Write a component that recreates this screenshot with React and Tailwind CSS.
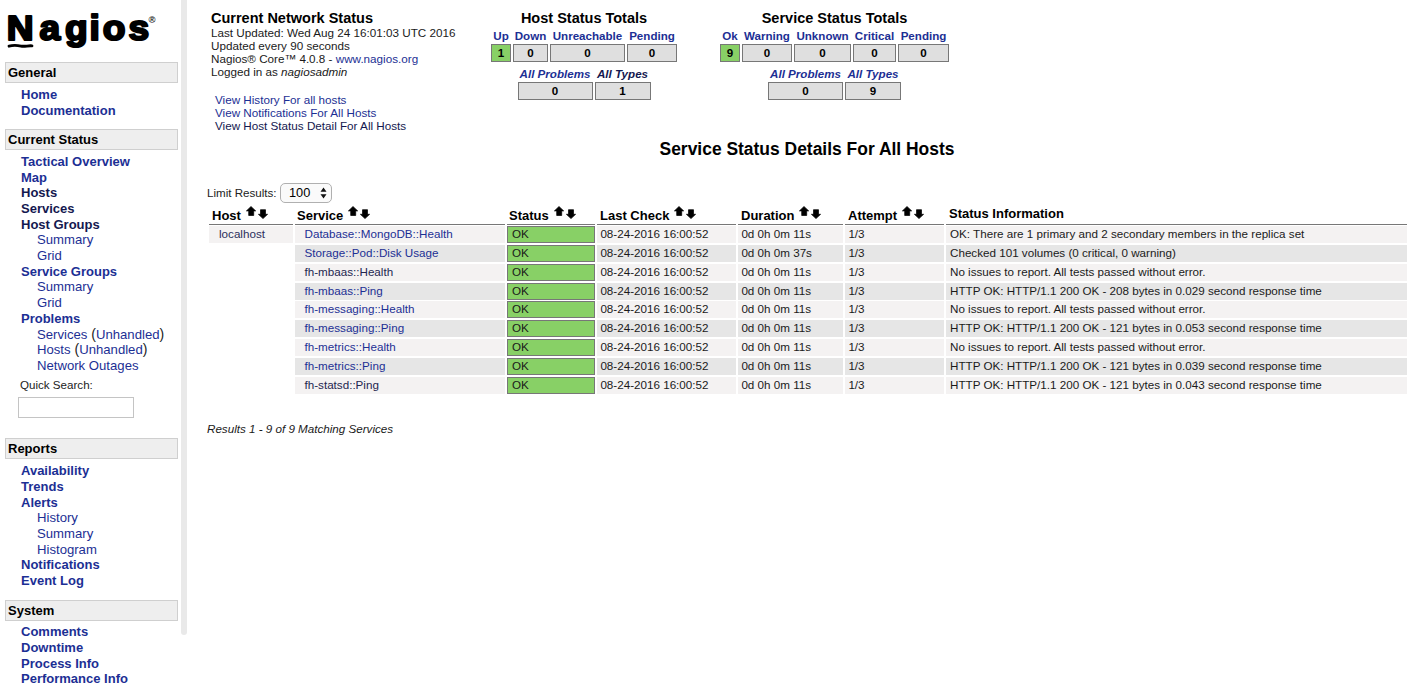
import React from "react";

const LINK = "text-[#1c2f94]";
const VISITED = "text-[#14184f]";

function SectionHeader({ children }) {
  return (
    <div className="ml-[5px] flex h-[21px] w-[173px] items-center border border-[#cfcfcf] bg-[#eeeeee] pl-[2px] text-[13px] font-bold text-black">
      {children}
    </div>
  );
}

function NavItem({ children, visited, sub }) {
  return (
    <li
      className={`flex h-[15.67px] items-center whitespace-pre ${visited ? VISITED : LINK} ${
        sub ? "pl-[37px] text-[13.15px]" : "pl-[21px] font-bold"
      }`}
    >
      {children}
    </li>
  );
}

function Unhandled({ label }) {
  return (
    <span className="leading-[14px]">
      <a>{label}</a>
      <span className="text-[14px] text-[#222]"> (</span>
      <a>Unhandled</a>
      <span className="text-[14px] text-[#222]">)</span>
    </span>
  );
}

function Logo() {
  return (
    <svg className="block h-[62px] w-[180px]" viewBox="0 0 180 62">
      <text
        transform="scale(1.05 1)"
        x="6.4 37.7 61.9 85.2 97.8 122.5"
        y="39.6"
        fontFamily="Liberation Sans, sans-serif"
        fontWeight="700"
        fontSize="35.4"
        stroke="#000"
        strokeWidth="2.2"
        strokeLinejoin="round"
      >
        Nagios
      </text>
      <path
        d="M9 46.2 C13 45.1 17 45.3 21 46.1 C25 46.8 28 45.4 32 45.8"
        fill="none"
        stroke="#000"
        strokeWidth="2.8"
        strokeLinecap="round"
      />
      <text x="148.5" y="23" fontFamily="Liberation Sans, sans-serif" fontWeight="700" fontSize="9.5" fill="#222">
        ®
      </text>
    </svg>
  );
}

function Sidebar() {
  return (
    <aside className="w-[181px] shrink-0 text-[13px]">
      <Logo />
      <SectionHeader>General</SectionHeader>
      <ul className="h-[46px] pt-[4px]">
        <NavItem>Home</NavItem>
        <NavItem>Documentation</NavItem>
      </ul>
      <SectionHeader>Current Status</SectionHeader>
      <ul className="h-[227px] pt-[4.1px]">
        <NavItem>Tactical Overview</NavItem>
        <NavItem>Map</NavItem>
        <NavItem visited>Hosts</NavItem>
        <NavItem visited>Services</NavItem>
        <NavItem visited>Host Groups</NavItem>
        <NavItem sub>Summary</NavItem>
        <NavItem sub>Grid</NavItem>
        <NavItem>Service Groups</NavItem>
        <NavItem sub>Summary</NavItem>
        <NavItem sub>Grid</NavItem>
        <NavItem>Problems</NavItem>
        <NavItem sub>
          <Unhandled label="Services" />
        </NavItem>
        <NavItem sub>
          <Unhandled label="Hosts" />
        </NavItem>
        <NavItem sub>Network Outages</NavItem>
      </ul>
      <div className="h-[61px]">
        <label className="block pl-[20px] text-[11.6px] leading-[15px] text-[#222]">Quick Search:</label>
        <input className="mt-[5px] ml-[18px] block h-[21px] w-[116px] border border-[#c4c4c4] bg-white outline-none" />
      </div>
      <SectionHeader>Reports</SectionHeader>
      <ul className="h-[141px] pt-[4.4px]">
        <NavItem>Availability</NavItem>
        <NavItem>Trends</NavItem>
        <NavItem>Alerts</NavItem>
        <NavItem sub>History</NavItem>
        <NavItem sub>Summary</NavItem>
        <NavItem sub>Histogram</NavItem>
        <NavItem>Notifications</NavItem>
        <NavItem>Event Log</NavItem>
      </ul>
      <SectionHeader>System</SectionHeader>
      <ul className="pt-[3.4px]">
        <NavItem>Comments</NavItem>
        <NavItem>Downtime</NavItem>
        <NavItem>Process Info</NavItem>
        <NavItem>Performance Info</NavItem>
      </ul>
    </aside>
  );
}

function Cell({ label, value, width, ok, visited }) {
  return (
    <div className={`flex shrink-0 flex-col items-center ${width}`}>
      <div className={`h-[16px] leading-[15px] whitespace-nowrap ${visited ? VISITED : LINK}`}>{label}</div>
      <div
        className={`flex h-[18px] w-full items-center justify-center border border-[#777] text-black ${
          ok ? "bg-[#88d066]" : "bg-[#dfdfdf]"
        }`}
      >
        {value}
      </div>
    </div>
  );
}

function Totals({ title, cells, summary }) {
  return (
    <section className="flex flex-col items-center pt-[10px] text-[11.6px] font-bold">
      <h2 className="h-[18px] text-[14.5px] leading-[17px] text-black">{title}</h2>
      <div className="flex gap-[2px]">
        {cells.map((c) => (
          <Cell key={c.label} {...c} />
        ))}
      </div>
      <div className="mt-[4px] flex gap-[2px]">
        {summary.map((c) => (
          <div key={c.label} className="[&>div>div:first-child]:italic">
            <Cell {...c} />
          </div>
        ))}
      </div>
    </section>
  );
}

const HOST_CELLS = [
  { label: "Up", value: "1", width: "w-[20px]", ok: true },
  { label: "Down", value: "0", width: "w-[35px]" },
  { label: "Unreachable", value: "0", width: "w-[75px]" },
  { label: "Pending", value: "0", width: "w-[50px]" },
];

const SERVICE_CELLS = [
  { label: "Ok", value: "9", width: "w-[20px]", ok: true },
  { label: "Warning", value: "0", width: "w-[50px]" },
  { label: "Unknown", value: "0", width: "w-[57px]" },
  { label: "Critical", value: "0", width: "w-[43px]" },
  { label: "Pending", value: "0", width: "w-[51px]" },
];

function SortArrows() {
  return (
    <svg className="ml-[5px] h-[15px] w-[22px] shrink-0" viewBox="0 0 22 15">
      <path
        d="M5 1.5 L9.7 5.9 H7.7 V10.5 H2.7 V5.9 H0.4 Z M17 13.6 L12.4 9.3 H14.5 V4.7 H19.5 V9.3 H21.6 Z"
        fill="#000"
        stroke="#000"
        strokeWidth="0.7"
        strokeLinejoin="round"
      />
    </svg>
  );
}

const COLUMNS = [
  { title: "Host", sort: true, pad: "pl-[3px]" },
  { title: "Service", sort: true, pad: "pl-[2px]" },
  { title: "Status", sort: true, pad: "pl-[2px]" },
  { title: "Last Check", sort: true, pad: "pl-[3px]" },
  { title: "Duration", sort: true, pad: "pl-[3px]" },
  { title: "Attempt", sort: true, pad: "pl-[3px]" },
  { title: "Status Information", sort: false, pad: "pl-[3px]" },
];

const http = (n, t) => `HTTP OK: HTTP/1.1 200 OK - ${n} bytes in ${t} second response time`;
const CLEAN = "No issues to report. All tests passed without error.";

const ROWS = [
  { service: "Database::MongoDB::Health", info: "OK: There are 1 primary and 2 secondary members in the replica set" },
  { service: "Storage::Pod::Disk Usage", duration: "0d 0h 0m 37s", info: "Checked 101 volumes (0 critical, 0 warning)" },
  { service: "fh-mbaas::Health", visited: true, info: CLEAN },
  { service: "fh-mbaas::Ping", info: http(208, "0.029") },
  { service: "fh-messaging::Health", info: CLEAN },
  { service: "fh-messaging::Ping", info: http(121, "0.053") },
  { service: "fh-metrics::Health", info: CLEAN },
  { service: "fh-metrics::Ping", info: http(121, "0.039") },
  { service: "fh-statsd::Ping", visited: true, info: http(121, "0.043") },
];

const GRID = "grid grid-cols-[84px_210px_88px_139px_105px_99px_461px] gap-x-[2px]";

function StatusTable() {
  return (
    <div className="ml-[2px] text-[11.65px] whitespace-nowrap text-[#1a1a1a]">
      <div className={`${GRID} h-[19px] text-[13px] font-bold text-black`}>
        {COLUMNS.map((c) => (
          <div key={c.title} className={`flex border-b border-[#777] leading-[16px] ${c.pad}`}>
            <span className={c.sort ? "pt-[3px]" : "pt-[1px]"}>{c.title}</span>
            {c.sort && <SortArrows />}
          </div>
        ))}
      </div>
      <div className="mt-[2px] flex flex-col gap-[1.85px]">
        {ROWS.map((r, i) => {
          const bg = i % 2 ? "bg-[#e6e6e6]" : "bg-[#f4f2f2]";
          return (
            <div key={r.service} className={`${GRID} h-[17px] leading-[16.8px]`}>
              {i === 0 ? <div className={`${bg} pl-[10px] text-[#2b2f5c]`}>localhost</div> : <div />}
              <div className={`${bg} pl-[9.5px] ${r.visited ? "text-[#23264f]" : LINK}`}>{r.service}</div>
              <div className="border border-[#777] bg-[#88d066] pl-[4px] leading-[14.8px]">OK</div>
              <div className={`${bg} pl-[3.4px]`}>08-24-2016 16:00:52</div>
              <div className={`${bg} pl-[3.4px]`}>{r.duration || "0d 0h 0m 11s"}</div>
              <div className={`${bg} pl-[3.4px]`}>1/3</div>
              <div className={`${bg} pl-[4px]`}>{r.info}</div>
            </div>
          );
        })}
      </div>
    </div>
  );
}

export default function App() {
  return (
    <div className="flex h-[686px] w-[1417px] overflow-hidden bg-white font-['Liberation_Sans',Arial,sans-serif]">
      <Sidebar />
      <div className="h-[635px] w-[6px] shrink-0 rounded-b-[3px] bg-[#e9e9e9]" />
      <main className="flex flex-col pl-[20px]">
        <div className="flex h-[138px]">
          <section className="w-[284px] pt-[10px] pl-[4px] text-[11.68px] leading-[13px] whitespace-nowrap text-[#1a1a1a]">
            <h1 className="h-[16px] text-[14.5px] leading-[17px] font-bold text-black">Current Network Status</h1>
            <p>Last Updated: Wed Aug 24 16:01:03 UTC 2016</p>
            <p>Updated every 90 seconds</p>
            <p>
              Nagios® Core™ 4.0.8 - <a className={LINK}>www.nagios.org</a>
            </p>
            <p>
              Logged in as <i>nagiosadmin</i>
            </p>
            <div className={`mt-[15px] pl-[4px] ${LINK}`}>
              <p>View History For all hosts</p>
              <p>View Notifications For All Hosts</p>
              <p className={VISITED}>View Host Status Detail For All Hosts</p>
            </div>
          </section>
          <Totals
            title="Host Status Totals"
            cells={HOST_CELLS}
            summary={[
              { label: "All Problems", value: "0", width: "w-[75px]" },
              { label: "All Types", value: "1", width: "w-[56px]", visited: true },
            ]}
          />
          <div className="w-[43px]" />
          <Totals
            title="Service Status Totals"
            cells={SERVICE_CELLS}
            summary={[
              { label: "All Problems", value: "0", width: "w-[75px]" },
              { label: "All Types", value: "9", width: "w-[56px]" },
            ]}
          />
        </div>
        <h2 className="h-[45px] w-[1200px] text-center text-[17.45px] leading-[23px] font-bold text-black">
          Service Status Details For All Hosts
        </h2>
        <div className="flex h-[22px] items-start text-[11.6px] text-[#222]">
          <span className="w-[73px] leading-[20px] whitespace-nowrap">Limit Results:</span>
          <div className="flex h-[20px] w-[52px] items-center justify-between rounded-[5px] border border-[#b0b0b0] bg-[#fafafa] pr-[4px] pl-[8px] text-[12.8px] text-black">
            100
            <svg className="h-[12px] w-[7px]" viewBox="0 0 7 12">
              <path d="M3.5 0.5 L6.5 4.8 H0.5 Z M3.5 11.5 L6.5 7.2 H0.5 Z" fill="#111" />
            </svg>
          </div>
        </div>
        <StatusTable />
        <p className="mt-[28px] text-[11.63px] leading-[14px] text-[#1a1a1a] italic">
          Results 1 - 9 of 9 Matching Services
        </p>
      </main>
    </div>
  );
}
